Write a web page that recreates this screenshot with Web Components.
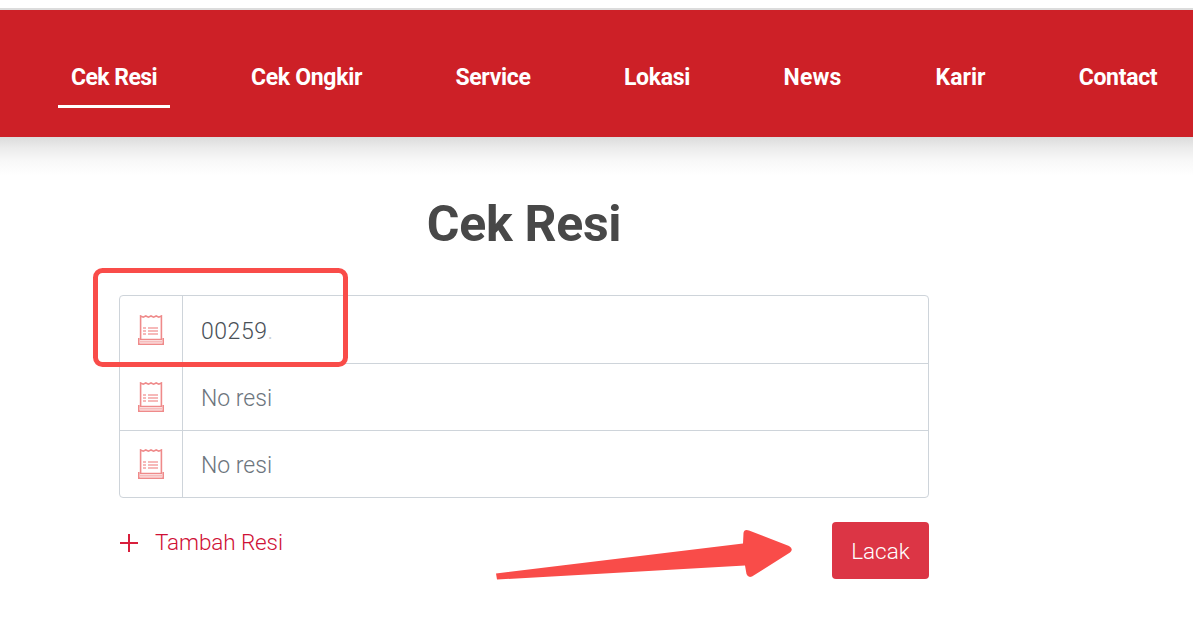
<!DOCTYPE html>
<html><head><meta charset="utf-8"><title>Cek Resi</title>
<style>html,body{margin:0;padding:0;background:#fff;overflow:hidden}body{font-family:Roboto,"Liberation Sans",sans-serif;height:638px}</style>
</head><body>
<resi-page></resi-page>
<template id="t-page"><style>
:host{display:block;position:relative;width:1193px;height:638px;overflow:hidden}
main{display:block;width:810px;margin-left:119px}
h1{margin:0;height:158px;box-sizing:border-box;padding-top:53px;text-align:center;font:700 50px/68px Roboto,sans-serif;color:#484848;letter-spacing:-.3px}
.foot{display:flex;justify-content:space-between;margin-top:24px}
.over{position:absolute;left:0;top:0;pointer-events:none}
</style>
<resi-nav>
<nav-item active w="112" style="margin-left:58px;letter-spacing:-.55px">Cek Resi</nav-item>
<nav-item w="137" style="margin-left:68px">Cek Ongkir</nav-item>
<nav-item w="100" style="margin-left:68px">Service</nav-item>
<nav-item w="90" style="margin-left:69px">Lokasi</nav-item>
<nav-item w="83" style="margin-left:69px;letter-spacing:.1px">News</nav-item>
<nav-item w="75" style="margin-left:69px;letter-spacing:0">Karir</nav-item>
<nav-item w="104" style="margin-left:68px">Contact</nav-item>
</resi-nav>
<main>
<h1>Cek Resi</h1>
<resi-form>
<resi-row value="00259"></resi-row>
<resi-row placeholder="No resi" short></resi-row>
<resi-row placeholder="No resi" last></resi-row>
</resi-form>
<div class="foot"><add-link>Tambah Resi</add-link><track-button>Lacak</track-button></div>
</main>
<svg class="over" width="1193" height="638" viewBox="0 0 1193 638" fill="#f94c49">
<rect x="95.500" y="270.500" width="250" height="94" rx="7" fill="none" stroke="#f94c49" stroke-width="5"/>
<path d="M496 573.500 L743 543.500 L743.500 533 Q744 529 749 530.500 L789 546 Q794 549 790 552.500 L752 576.500 Q748 578 746.500 574 L745 565.500 L497 579.500 Z"/>
</svg>
</template>
<template id="t-nav"><style>
:host{display:flex;align-items:flex-start;box-sizing:border-box;margin-top:8px;height:129px;border-top:2px solid #dcdcdc;background:#cd2027;position:relative}
:host::after{content:"";position:absolute;left:0;right:0;top:100%;height:38px;background:linear-gradient(#dcdcdc 0,#ececec 30%,#f8f8f8 62%,#fff 100%)}
</style><slot></slot></template>
<template id="t-item"><style>
:host{display:block;flex:none;box-sizing:border-box;height:73px;margin-top:25px;padding-top:27px;text-align:center;color:#fff;font:700 23px/32px Roboto,sans-serif;letter-spacing:-.3px;white-space:nowrap}
:host([active]){border-bottom:3px solid #fff}
</style><slot></slot></template>
<template id="t-form"><style>
:host{display:block;border:1px solid #ced4da;border-radius:4px;box-sizing:border-box;height:203px}
</style><slot></slot></template>
<template id="t-row"><style>
:host{display:flex;height:67px;border-bottom:1px solid #ced4da;box-sizing:content-box}
:host([short]){height:66px}
:host([last]){border-bottom:0}
.ic{flex:none;width:63px;border-right:1px solid #ced4da;display:flex;align-items:flex-start;justify-content:center;padding-top:19px;box-sizing:border-box}
.tx{flex:1;padding-left:18px;font:300 23px/72px Roboto,sans-serif;color:#6c757d;white-space:nowrap}
:host([short]) .tx{line-height:70px}
:host([last]) .tx{line-height:70px}
:host([short]) .ic{padding-top:18px}
:host([last]) .ic{padding-top:18px}
.tx.v{color:#495057;letter-spacing:.55px}
.tx i{font-style:normal;color:#c9ced3}
svg{display:block}
</style><div class="ic"><svg width="26" height="30" viewBox="0 0 26 30" fill="none" stroke="#ef8a8a" stroke-width="1.600"><path d="M2.600 1v23.500h20.800V1l-2.600 1.200-2.600-1.200-2.600 1.200L13 1l-2.600 1.200L7.800 1 5.200 2.200z"/><path d="M.8 23v6.200h24.400V23" /><path d="M1 26.800h24" stroke="#f6bcbc" stroke-width="1.800"/><path d="M10 13h10M10 16h10M10 19h10M5 13h3M5 16h3M5 19h3" stroke-width="1.400" stroke="#f3a3a3"/></svg></div><div class="tx"></div></template>
<template id="t-add"><style>
:host{display:flex;align-items:flex-start;color:#cf1035;font:300 22.500px/40px Roboto,sans-serif;letter-spacing:-.1px}
svg{display:block;margin:12px 17px 0 1px}
</style><svg width="18" height="18" viewBox="0 0 18 18" stroke="#d81f3c" stroke-width="2"><path d="M0 9h18M9 0v18"/></svg><slot></slot></template>
<template id="t-btn"><style>
:host{display:block;width:97px;height:57px;box-sizing:border-box;border-radius:4px;background:#dc3545;color:#fff;text-align:center;font:300 22.500px/59px Roboto,sans-serif}
</style><slot></slot></template>
<script>
const def=(n,id,init)=>customElements.define(n,class extends HTMLElement{constructor(){super();this.attachShadow({mode:'open'}).appendChild(document.getElementById(id).content.cloneNode(true));}connectedCallback(){init&&init(this);}});
def('resi-nav','t-nav');
def('nav-item','t-item',e=>{e.style.width=e.getAttribute('w')+'px';});
def('resi-form','t-form');
def('resi-row','t-row',e=>{const t=e.shadowRoot.querySelector('.tx');const v=e.getAttribute('value');if(v){t.textContent=v;t.classList.add('v');const d=document.createElement('i');d.textContent='.';t.appendChild(d);}else t.textContent=e.getAttribute('placeholder');});
def('add-link','t-add');def('track-button','t-btn');
def('resi-page','t-page');
</script>
</body></html>
